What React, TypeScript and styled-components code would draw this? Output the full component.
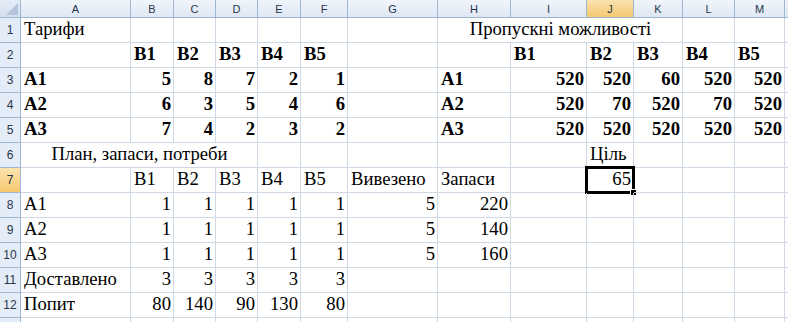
import React from "react";
import styled, { createGlobalStyle, css } from "styled-components";

const GlobalStyle = createGlobalStyle`
    html, body {
        margin: 0;
        padding: 0;
        background: #ffffff;
        overflow: hidden;
    }
`;

const COLS = ["A", "B", "C", "D", "E", "F", "G", "H", "I", "J", "K", "L", "M", "N"];
const WIDTHS = [110, 43, 42, 42, 43, 47, 90, 73, 76, 47, 49, 52, 50, 40];
const ROWS = 13;
// last row and last column only peek in at the edge, so their labels stay hidden
const LAST_SHOWN_ROW = 12;
const LAST_SHOWN_COL = "M";

type Cell = { v: string; b?: boolean; al?: "left" | "right" | "center"; span?: number };

const data: Record<string, Cell> = {};
const put = (ref: string, v: string | number, b = false, extra: Partial<Cell> = {}) => {
    data[ref] = { v: String(v), b, al: typeof v === "number" ? "right" : "left", ...extra };
};

put("A1", "Тарифи");
put("H1", "Пропускні можливості", false, { al: "center", span: 4 });
["B", "C", "D", "E", "F"].forEach((c, i) => put(c + "2", "В" + (i + 1), true));
["I", "J", "K", "L", "M"].forEach((c, i) => put(c + "2", "В" + (i + 1), true));

const tariffs = [
    [5, 8, 7, 2, 1],
    [6, 3, 5, 4, 6],
    [7, 4, 2, 3, 2],
];
const capacity = [
    [520, 520, 60, 520, 520],
    [520, 70, 520, 70, 520],
    [520, 520, 520, 520, 520],
];
tariffs.forEach((row, r) => {
    put("A" + (r + 3), "А" + (r + 1), true);
    put("H" + (r + 3), "А" + (r + 1), true);
    row.forEach((v, i) => put(COLS[i + 1] + (r + 3), v, true));
    capacity[r].forEach((v, i) => put(COLS[i + 8] + (r + 3), v, true));
});

put("A6", "План, запаси, потреби", false, { al: "center", span: 4 });
put("J6", "Ціль");
["B", "C", "D", "E", "F"].forEach((c, i) => put(c + "7", "В" + (i + 1)));
put("G7", "Вивезено");
put("H7", "Запаси");
put("J7", 65);

const stock = [220, 140, 160];
stock.forEach((s, r) => {
    put("A" + (r + 8), "А" + (r + 1));
    ["B", "C", "D", "E", "F"].forEach((c) => put(c + (r + 8), 1));
    put("G" + (r + 8), 5);
    put("H" + (r + 8), s);
});
put("A11", "Доставлено");
["B", "C", "D", "E", "F"].forEach((c) => put(c + "11", 3));
put("A12", "Попит");
[80, 140, 90, 130, 80].forEach((v, i) => put(COLS[i + 1] + "12", v));

const ACTIVE_COL = "J";
const ACTIVE_ROW = 7;

const Sheet = styled.div`
    display: grid;
    grid-template-columns: 21px ${WIDTHS.map((w) => w + "px").join(" ")};
    grid-template-rows: 18px repeat(${ROWS}, 25px);
    width: 788px;
    height: 322px;
    overflow: hidden;
`;

const headerBase = css<{ $active?: boolean }>`
    box-sizing: border-box;
    display: flex;
    align-items: center;
    justify-content: center;
    font-family: "Liberation Sans", Arial, sans-serif;
    font-size: 11px;
    color: #27364a;
    border-right: 1px solid #9eb6ce;
    border-bottom: 1px solid #9eb6ce;
    background: ${(p) =>
        p.$active
            ? "linear-gradient(#fbe3b0, #f6c86f)"
            : "linear-gradient(#f1f5fb, #dee7f3)"};
`;

const Corner = styled.div`
    ${headerBase};
    position: relative;
    background: linear-gradient(#e4ecf7, #d5dfee);
    &::after {
        content: "";
        position: absolute;
        right: 2px;
        bottom: 2px;
        border-left: 12px solid transparent;
        border-bottom: 12px solid #b4c6dd;
    }
`;

const ColHead = styled.div<{ $active?: boolean }>`
    ${headerBase};
`;

const RowHead = styled.div<{ $active?: boolean }>`
    ${headerBase};
    font-size: 12px;
    background: ${(p) => (p.$active ? "linear-gradient(#fbe3b0, #f6c86f)" : "#e4ecf7")};
`;

const CellBox = styled.div<{ $align: string; $bold?: boolean; $span: number; $selected?: boolean }>`
    box-sizing: border-box;
    position: relative;
    grid-column: span ${(p) => p.$span};
    display: flex;
    align-items: flex-end;
    justify-content: ${(p) =>
        p.$align === "right" ? "flex-end" : p.$align === "center" ? "center" : "flex-start"};
    padding: 0 2px 3px 3px;
    border-right: 1px solid #d0d7e5;
    border-bottom: 1px solid #d0d7e5;
    font-family: "Liberation Serif", "Times New Roman", serif;
    font-size: 18.67px;
    line-height: 21px;
    font-weight: ${(p) => (p.$bold ? 700 : 400)};
    color: #000000;
    white-space: nowrap;
    ${(p) =>
        p.$selected &&
        css`
            &::before {
                content: "";
                position: absolute;
                left: -2px;
                top: -2px;
                right: -2px;
                bottom: -2px;
                border: 3px solid #000000;
                pointer-events: none;
            }
            &::after {
                content: "";
                position: absolute;
                right: -4px;
                bottom: -4px;
                width: 5px;
                height: 5px;
                background: #000000;
                border: 1px solid #ffffff;
            }
        `}
`;

const App: React.FC = () => {
    const rows: React.ReactNode[] = [];
    for (let r = 1; r <= ROWS; r++) {
        rows.push(
            <RowHead key={"h" + r} $active={r === ACTIVE_ROW}>
                {r <= LAST_SHOWN_ROW ? r : null}
            </RowHead>
        );
        let skip = 0;
        COLS.forEach((c) => {
            if (skip > 0) {
                skip--;
                return;
            }
            const cell = data[c + r];
            const span = cell?.span ?? 1;
            skip = span - 1;
            rows.push(
                <CellBox
                    key={c + r}
                    $align={cell?.al ?? "left"}
                    $bold={cell?.b}
                    $span={span}
                    $selected={c === ACTIVE_COL && r === ACTIVE_ROW}
                >
                    {cell?.v}
                </CellBox>
            );
        });
    }

    return (
        <>
            <GlobalStyle />
            <Sheet>
                <Corner />
                {COLS.map((c) => (
                    <ColHead key={c} $active={c === ACTIVE_COL}>
                        {c <= LAST_SHOWN_COL ? c : null}
                    </ColHead>
                ))}
                {rows}
            </Sheet>
        </>
    );
};

export default App;
